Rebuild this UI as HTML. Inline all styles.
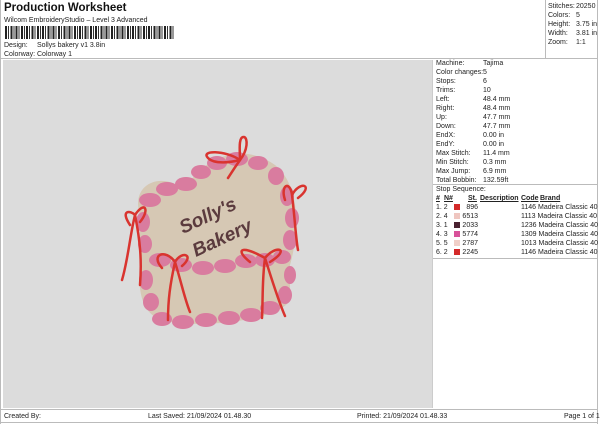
<!DOCTYPE html>
<html><head><meta charset="utf-8"><style>
*{margin:0;padding:0;box-sizing:border-box}
body{width:600px;height:424px;background:#fff;font-family:"Liberation Sans",sans-serif;font-size:7px;color:#222;position:relative;overflow:hidden}
.a{position:absolute;white-space:nowrap;line-height:9px}
.h{position:absolute;background:#bbb}
</style></head><body>
<div class="a" style="left:4px;top:2px;font-size:11.5px;font-weight:bold;line-height:13px;color:#111">Production Worksheet</div>
<div class="a" style="left:4px;top:16px">Wilcom EmbroideryStudio – Level 3 Advanced</div>
<div style="position:absolute;left:5px;top:26px;width:169px;height:13px;background:repeating-linear-gradient(90deg,#222 0 2px,#fff 2px 3px,#333 3px 4px,#fff 4px 5.3px)"></div>
<div class="a" style="left:4px;top:41px">Design:</div><div class="a" style="left:37px;top:41px">Sollys bakery v1 3.8in</div>
<div class="a" style="left:4px;top:50px">Colorway:</div><div class="a" style="left:37px;top:50px">Colorway 1</div>
<div class="h" style="left:0;top:0;width:1px;height:424px"></div>
<div class="h" style="left:597px;top:0;width:1px;height:424px"></div>
<div class="h" style="left:545px;top:0;width:1px;height:59px"></div>
<div class="h" style="left:0;top:58px;width:598px;height:1px"></div>
<div class="a" style="left:548px;top:2px">Stitches:</div><div class="a" style="left:576px;top:2px">20250</div>
<div class="a" style="left:548px;top:11px">Colors:</div><div class="a" style="left:576px;top:11px">5</div>
<div class="a" style="left:548px;top:20px">Height:</div><div class="a" style="left:576px;top:20px">3.75 in</div>
<div class="a" style="left:548px;top:29px">Width:</div><div class="a" style="left:576px;top:29px">3.81 in</div>
<div class="a" style="left:548px;top:38px">Zoom:</div><div class="a" style="left:576px;top:38px">1:1</div>
<div style="position:absolute;left:3px;top:60px;width:429px;height:348px;background:#dcdcdc"></div>
<svg style="position:absolute;left:0;top:0" width="600" height="424">
<path d="M140 215 C130 185 160 170 185 190 C200 160 240 140 275 165 C300 185 300 230 290 265 L290 300 C280 320 200 330 160 320 C140 310 138 290 140 260 Z" fill="#d6c8b4"/>
<g fill="#d97c9f">
<ellipse cx="150" cy="200" rx="11" ry="7"/><ellipse cx="167" cy="189" rx="11" ry="7"/><ellipse cx="186" cy="184" rx="11" ry="7"/><ellipse cx="201" cy="172" rx="10" ry="7"/><ellipse cx="217" cy="163" rx="10" ry="7"/><ellipse cx="237" cy="159" rx="11" ry="7"/><ellipse cx="258" cy="163" rx="10" ry="7"/><ellipse cx="276" cy="176" rx="8" ry="9"/><ellipse cx="287" cy="196" rx="7" ry="10"/><ellipse cx="292" cy="218" rx="7" ry="10"/><ellipse cx="290" cy="240" rx="7" ry="10"/><ellipse cx="282" cy="257" rx="9" ry="7"/>
<ellipse cx="143" cy="222" rx="7" ry="10"/><ellipse cx="145" cy="244" rx="7" ry="9"/><ellipse cx="160" cy="260" rx="11" ry="7"/><ellipse cx="181" cy="265" rx="11" ry="7"/><ellipse cx="203" cy="268" rx="11" ry="7"/><ellipse cx="225" cy="266" rx="11" ry="7"/><ellipse cx="246" cy="261" rx="11" ry="7"/><ellipse cx="265" cy="260" rx="10" ry="7"/>
<ellipse cx="146" cy="280" rx="7" ry="10"/><ellipse cx="151" cy="302" rx="8" ry="9"/><ellipse cx="162" cy="319" rx="10" ry="7"/><ellipse cx="183" cy="322" rx="11" ry="7"/><ellipse cx="206" cy="320" rx="11" ry="7"/><ellipse cx="229" cy="318" rx="11" ry="7"/><ellipse cx="251" cy="315" rx="11" ry="7"/><ellipse cx="270" cy="308" rx="10" ry="7"/><ellipse cx="285" cy="295" rx="7" ry="9"/><ellipse cx="290" cy="275" rx="6" ry="9"/>
</g>
<g fill="none" stroke="#d9342f" stroke-width="2.5" stroke-linecap="round">
<path d="M240 160 C225 150 200 150 208 158 C215 165 232 162 240 160 C248 150 248 138 244 137 C238 136 240 152 240 160"/><path d="M240 160 C233 170 230 175 228 178"/>
<path d="M130 225 C120 210 130 210 135 215 M135 215 C145 200 150 210 140 222 M135 215 C130 235 128 260 122 280 M135 215 C140 240 142 260 140 285"/>
<path d="M285 200 C280 185 290 180 292 195 C300 180 315 185 298 198 M292 195 C295 220 296 240 298 250"/>
<path d="M162 268 C150 255 165 248 175 262 C182 250 195 255 182 266 M175 262 C170 285 168 300 168 320 M175 262 C182 285 185 300 190 312"/>
<path d="M250 262 C235 250 240 244 265 258 C275 245 292 248 270 262 M265 258 C262 280 263 300 262 318 M265 258 C272 280 278 300 285 316"/>
</g>
<text x="0" y="0" transform="translate(183 234) rotate(-25)" font-family="Liberation Sans,sans-serif" font-style="italic" font-weight="bold" font-size="19" fill="#5b3b3e">Solly's</text>
<text x="0" y="0" transform="translate(196 257) rotate(-25)" font-family="Liberation Sans,sans-serif" font-style="italic" font-weight="bold" font-size="19" fill="#5b3b3e">Bakery</text>
</svg>
<div style="position:absolute;left:432px;top:60px;width:1px;height:348px;background:#ccc"></div>
<div class="a" style="left:436px;top:59px;line-height:9px">Machine:<br>Color changes:<br>Stops:<br>Trims:<br>Left:<br>Right:<br>Up:<br>Down:<br>EndX:<br>EndY:<br>Max Stitch:<br>Min Stitch:<br>Max Jump:<br>Total Bobbin:</div>
<div class="a" style="left:483px;top:59px;line-height:9px">Tajima<br>5<br>6<br>10<br>48.4 mm<br>48.4 mm<br>47.7 mm<br>47.7 mm<br>0.00 in<br>0.00 in<br>11.4 mm<br>0.3 mm<br>6.9 mm<br>132.59ft</div>
<div class="h" style="left:433px;top:184px;width:165px;height:1px"></div>
<div class="a" style="left:436px;top:185px">Stop Sequence:</div>
<div class="a" style="left:436px;top:194px;font-weight:bold;text-decoration:underline">#</div>
<div class="a" style="left:444px;top:194px;font-weight:bold;text-decoration:underline">N#</div>
<div class="a" style="left:468px;top:194px;font-weight:bold;text-decoration:underline">St.</div>
<div class="a" style="left:480px;top:194px;font-weight:bold;text-decoration:underline">Description</div>
<div class="a" style="left:521px;top:194px;font-weight:bold;text-decoration:underline">Code</div>
<div class="a" style="left:540px;top:194px;font-weight:bold;text-decoration:underline">Brand</div>
<div style="position:absolute;left:436px;top:203px;line-height:9px" class="a">1. 2<br>2. 4<br>3. 1<br>4. 3<br>5. 5<br>6. 2</div>
<div style="position:absolute;left:454px;top:204px;width:6px;height:6px;background:#d42a2a"></div>
<div style="position:absolute;left:454px;top:213px;width:6px;height:6px;background:#efc6c0"></div>
<div style="position:absolute;left:454px;top:222px;width:6px;height:6px;background:#4a2230"></div>
<div style="position:absolute;left:454px;top:231px;width:6px;height:6px;background:#d8529a"></div>
<div style="position:absolute;left:454px;top:240px;width:6px;height:6px;background:#f0cfc8"></div>
<div style="position:absolute;left:454px;top:249px;width:6px;height:6px;background:#d42a2a"></div>
<div class="a" style="left:462px;top:203px;line-height:9px;width:16px;text-align:right">896<br>6513<br>2033<br>5774<br>2787<br>2245</div>
<div class="a" style="left:521px;top:203px;line-height:9px">1146 Madeira Classic 40<br>1113 Madeira Classic 40<br>1236 Madeira Classic 40<br>1309 Madeira Classic 40<br>1013 Madeira Classic 40<br>1146 Madeira Classic 40</div>
<div class="h" style="left:433px;top:258px;width:165px;height:1px"></div>
<div class="h" style="left:0;top:409px;width:598px;height:1px"></div>
<div class="h" style="left:0;top:422px;width:598px;height:1px"></div>
<div class="a" style="left:4px;top:412px">Created By:</div>
<div class="a" style="left:148px;top:412px">Last Saved: 21/09/2024 01.48.30</div>
<div class="a" style="left:357px;top:412px">Printed: 21/09/2024 01.48.33</div>
<div class="a" style="left:564px;top:412px">Page 1 of 1</div>
</body></html>
